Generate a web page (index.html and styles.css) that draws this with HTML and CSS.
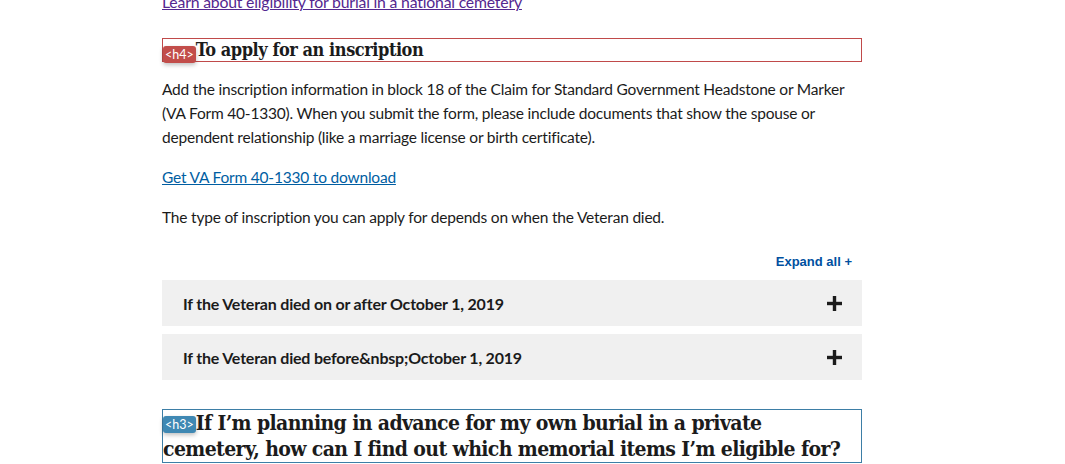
FILE: index.html
```html
<!DOCTYPE html>
<html lang="en">
<head>
<meta charset="utf-8">
<title>Inscription</title>
<link rel="stylesheet" href="styles.css">
</head>
<body>
<main class="content">
  <p class="top-link"><a class="visited" href="#">Learn about eligibility for burial in a national cemetery</a></p>
  <h4 class="outline outline-h4"><span class="tag tag-h4">&lt;h4&gt;</span>To apply for an inscription</h4>
  <p class="para para-first">Add the inscription information in block 18 of the Claim for Standard Government Headstone or Marker (VA Form 40-1330). When you submit the form, please include documents that show the spouse or dependent relationship (like a marriage license or birth certificate).</p>
  <p class="para"><a href="#">Get VA Form 40-1330 to download</a></p>
  <p class="para">The type of inscription you can apply for depends on when the Veteran died.</p>
  <div class="expand-row"><button class="expand-all">Expand all +</button></div>
  <div class="accordion">
    <div class="acc-item"><span class="acc-title">If the Veteran died on or after October 1, 2019</span><svg class="plus" width="15" height="15" viewBox="0 0 15 15"><rect x="5.8" y="0" width="3.4" height="15" fill="#1b1b1b"/><rect x="0" y="5.8" width="15" height="3.4" fill="#1b1b1b"/></svg></div>
    <div class="acc-item"><span class="acc-title">If the Veteran died before&amp;nbsp;October 1, 2019</span><svg class="plus" width="15" height="15" viewBox="0 0 15 15"><rect x="5.8" y="0" width="3.4" height="15" fill="#1b1b1b"/><rect x="0" y="5.8" width="15" height="3.4" fill="#1b1b1b"/></svg></div>
  </div>
  <h3 class="outline outline-h3"><span class="tag tag-h3">&lt;h3&gt;</span>If I’m planning in advance for my own burial in a private cemetery, how can I find out which memorial items I’m eligible for?</h3>
</main>
</body>
</html>
```
FILE: styles.css
```css
html, body {
  margin: 0;
  padding: 0;
  background: #ffffff;
}
body {
  font-family: "Lato", "Liberation Sans", sans-serif;
  color: #1b1b1b;
  font-size: 15.5px;
  letter-spacing: -0.2px;
  overflow: hidden;
  height: 464px;
}
.content {
  width: 700px;
  margin-left: 162px;
  margin-top: -10px;
}
a {
  color: #005ea2;
  text-decoration: underline;
}
a.visited {
  color: #54278f;
}
.top-link {
  margin: 0;
  line-height: 24px;
  font-size: 15.8px;
}
.outline {
  margin: 0;
  font-family: "DejaVu Serif Condensed", "DejaVu Serif", serif;
  font-weight: bold;
  color: #1b1b1b;
  box-sizing: border-box;
}
.outline-h4 {
  margin-top: 24px;
  border: 1px solid #c04a4a;
  height: 24px;
  font-size: 18px;
  line-height: 22px;
  letter-spacing: -0.45px;
}
.outline-h3 {
  margin-top: 29px;
  border: 1px solid #3d7ea6;
  font-size: 21px;
  line-height: 26px;
  letter-spacing: -0.62px;
}
.tag {
  display: inline-block;
  font-family: "Lato", sans-serif;
  font-weight: normal;
  letter-spacing: 0;
  color: #fff;
  font-size: 12.5px;
  line-height: 17px;
  padding: 0 2px;
  border-radius: 3px;
  box-shadow: 0 2px 4px rgba(0, 0, 0, 0.25);
}
.tag-h4 { background: #c24d4a; vertical-align: -3px; }
.tag-h3 { background: #3f88b3; vertical-align: 1px; }
.para {
  margin: 16px 0 0;
  line-height: 24px;
}
.para-first {
  margin-top: 15px;
}
.expand-row {
  display: flex;
  justify-content: flex-end;
  margin-top: 25px;
  padding-right: 10px;
}
.expand-all {
  background: none;
  border: 0;
  padding: 0;
  font-family: "Liberation Sans", Arial, sans-serif;
  font-weight: bold;
  font-size: 13px;
  letter-spacing: 0;
  color: #0050a0;
  line-height: 16px;
}
.accordion {
  margin-top: 10px;
  display: flex;
  flex-direction: column;
  gap: 8px;
}
.acc-item {
  background: #f0f0f0;
  height: 46px;
  display: flex;
  align-items: center;
  justify-content: space-between;
  padding: 0 20px 0 21px;
}
.acc-title {
  font-weight: bold;
  font-size: 16px;
}
.plus { display: block; }
```
